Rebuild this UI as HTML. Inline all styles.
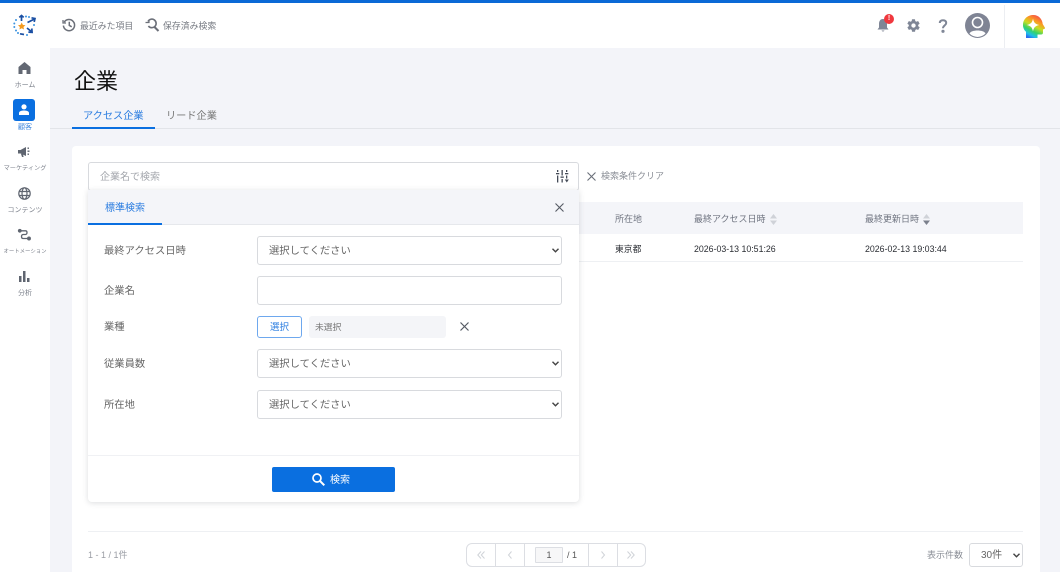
<!DOCTYPE html>
<html lang="ja"><head><meta charset="utf-8"><title>企業</title>
<style>
*{box-sizing:border-box}
html,body{margin:0;padding:0;width:1060px;height:572px;overflow:hidden;background:#f3f4f9}
body{font-family:"Liberation Sans","Noto Sans CJK JP",sans-serif;color:#333;position:relative}
.a{position:absolute;white-space:nowrap}
.t{position:absolute;white-space:nowrap;line-height:14px}
svg{position:absolute;overflow:visible}
.nav{position:absolute;left:0;width:50px;text-align:center;font-size:7px;line-height:10px;color:#7d828c;white-space:nowrap}
.sel{position:absolute;left:257px;width:305px;height:29px;background:#fff;border:1px solid #d8dade;border-radius:3px;font-size:10.3px;line-height:29px;padding-left:11px;color:#666}
.lab{position:absolute;left:104px;font-size:10.3px;line-height:14px;color:#666;white-space:nowrap}
.th{position:absolute;top:212px;font-size:9px;line-height:14px;color:#6f7480;white-space:nowrap}
.td{position:absolute;top:242px;font-size:8.8px;line-height:14px;color:#2a2d33;white-space:nowrap}
</style></head><body>
<div class="a" style="left:0;top:0;width:1060px;height:48px;background:#fff"></div>
<div class="a" style="left:0;top:0;width:1060px;height:3px;background:#0a69d6"></div>
<div class="a" style="left:0;top:48px;width:50px;height:524px;background:#fff"></div>

<!-- logo -->
<svg style="left:13px;top:15px" width="23" height="22" viewBox="0 0 23 22">
<polygon points="8.700,7.500 9.900,9.900 12.400,10.200 10.500,12 11,14.500 8.700,13.300 6.400,14.500 6.900,12 5,10.200 7.500,9.900" fill="#f39a1e"/>
<g fill="none" stroke="#1a4fa3" stroke-width="1.700">
<path d="M8.500 6V1.500"/><path d="M6.300 2.400L8.500.5l2.200 1.900"/>
<path d="M14.500 7.500L21.500 4"/><path d="M18.500 2.800L22 3.500l-.8 3.400"/>
<path d="M14 13l4.500 3.700"/><path d="M18.800 13.500l.3 3.800-3.700-.2"/>
<path d="M11 19.500L7 18.800"/>
</g>
<g fill="#3b93e0"><circle cx="3" cy="5" r="1"/><circle cx="1.300" cy="8.500" r="1"/><circle cx="1.300" cy="12" r="1"/><circle cx="3" cy="15.500" r="1"/><circle cx="5" cy="18" r="1"/><circle cx="13" cy="1.500" r="1"/><circle cx="16" cy="2" r="1"/><circle cx="21" cy="10" r="1"/><circle cx="14" cy="20" r="1"/></g>
</svg>

<!-- top links -->
<svg style="left:62px;top:18px" width="14" height="14" viewBox="0 0 14 14" fill="none" stroke="#6c7079" stroke-width="1.500"><path d="M2.200 4.200A5.600 5.600 0 1 1 1.400 7.600"/><path d="M1 2v3h3" stroke-width="1.300"/><path d="M7.300 3.800v3.600l2.400 1.400"/></svg>
<div class="t" style="left:80px;top:19px;font-size:8.900px;color:#777b83">最近みた項目</div>
<svg style="left:145px;top:18px" width="15" height="14" viewBox="0 0 15 14" fill="none" stroke="#6c7079" stroke-width="1.600"><path d="M3 3.500A4.300 4.300 0 1 1 3.400 8"/><path d="M9 8.500l4.500 4.500" stroke-width="2"/><path d="M0.500 4.500h3.500v-3" stroke-width="1.200"/></svg>
<div class="t" style="left:163px;top:19px;font-size:8.900px;color:#777b83">保存済み検索</div>

<!-- header right -->
<svg style="left:876px;top:18px" width="14" height="15" viewBox="0 0 14 15"><path d="M7 1C4 1 3 3.500 3 6v3.500L1.500 11.500h11L11 9.500V6C11 3.500 10 1 7 1z" fill="#7f8696"/><path d="M5.500 12.500a1.600 1.600 0 0 0 3 0z" fill="#7f8696"/></svg>
<div class="a" style="left:884px;top:14px;width:10px;height:10px;border-radius:50%;background:#f0383e;color:#fff;font-size:7px;line-height:10px;text-align:center;font-weight:bold">!</div>
<svg style="left:906px;top:18px" width="15" height="15" viewBox="0 0 24 24"><path fill="#7f8696" d="M19.400 13c.04-.3.100-.65.100-1s-.06-.7-.1-1l2.100-1.650c.2-.15.250-.4.120-.63l-2-3.460c-.12-.22-.38-.3-.6-.22l-2.500 1c-.52-.4-1.080-.73-1.700-.98l-.37-2.650A.5.500 0 0 0 14 2h-4c-.25 0-.46.180-.5.420l-.37 2.650c-.62.250-1.180.580-1.700.980l-2.500-1c-.22-.08-.48 0-.6.220l-2 3.460c-.13.220-.07.480.12.630L4.600 11c-.04.300-.1.660-.1 1s.06.700.1 1l-2.100 1.650c-.2.150-.250.400-.12.630l2 3.460c.12.220.38.300.6.220l2.500-1c.52.400 1.080.730 1.700.980l.37 2.650c.04.240.25.420.5.420h4c.25 0 .46-.18.500-.42l.37-2.650c.62-.25 1.180-.58 1.700-.98l2.500 1c.22.080.48 0 .6-.22l2-3.460c.13-.22.07-.48-.12-.63zM12 15.500a3.500 3.500 0 1 1 0-7 3.500 3.500 0 0 1 0 7z"/></svg>
<svg style="left:938px;top:19px" width="10" height="14" viewBox="0 0 10 14" fill="none" stroke="#7f8696" stroke-width="2"><path d="M1.800 4C1.800 2 3 1.200 5 1.200S8.200 2.200 8.200 4C8.200 6.300 5 6.500 5 9.300"/><circle cx="5" cy="12.300" r=".6" fill="#7f8696"/></svg>
<svg style="left:965px;top:13px" width="25" height="25" viewBox="0 0 25 25"><circle cx="12.500" cy="12.500" r="12.500" fill="#7f8494"/><circle cx="12.500" cy="9.500" r="5" fill="none" stroke="#fff" stroke-width="1.600"/><path d="M4.500 20.500C6 16.500 19 16.500 20.500 20.500A11 11 0 0 1 4.500 20.500z" fill="#fff"/></svg>
<div class="a" style="left:1004px;top:5px;width:1px;height:43px;background:#eceef2"></div>
<svg style="left:1023px;top:15px" width="22" height="23" viewBox="0 0 22 23">
<defs><linearGradient id="g" x1=".8" y1="0" x2=".3" y2="1"><stop offset="0" stop-color="#f43a5a"/><stop offset=".3" stop-color="#fb9a22"/><stop offset=".5" stop-color="#c8dd22"/><stop offset=".7" stop-color="#35d268"/><stop offset=".87" stop-color="#1ec0e8"/><stop offset="1" stop-color="#2a6cf0"/></linearGradient></defs>
<path d="M10.500 0C4.500 0 0 4 0 10c0 3 1.200 5.200 3 6.800V23h11.500v-3.500h3.500c1.500 0 2-.8 2-2v-3l1.600-.7c.5-.3.500-.8.200-1.300L19.700 9C19.300 4 15.500 0 10.500 0z" fill="url(#g)"/>
<path d="M10 3.500c.7 4 2 5.400 6.200 6.500-4.200 1.100-5.500 2.500-6.200 6.500-.7-4-2-5.400-6.200-6.500 4.200-1.100 5.500-2.500 6.200-6.500z" fill="#fff"/></svg>

<!-- sidebar -->
<svg style="left:18px;top:62px" width="13" height="12" viewBox="0 0 13 12"><path d="M6.500 0L12.500 5V12H8.500V8H4.500V12H.5V5z" fill="#636873"/></svg>
<div class="nav" style="top:80px;line-height:12px">ホーム</div>
<div class="a" style="left:13px;top:99px;width:22px;height:22px;border-radius:3px;background:#0a6fe0"></div>
<svg style="left:18px;top:104px" width="12" height="11" viewBox="0 0 12 11" fill="#fff"><circle cx="6" cy="2.800" r="2.600"/><path d="M1 11V9C1 7 4 6.500 6 6.500S11 7 11 9v2z"/></svg>
<div class="nav" style="top:122px;line-height:12px;color:#3b85dd">顧客</div>
<svg style="left:18px;top:146px" width="13" height="12" viewBox="0 0 13 12" fill="#5f6570"><path d="M0 4h2.500L8 1v9L2.500 7.500H0z"/><path d="M3 8h2l.6 3H4z"/><rect x="9.500" y="4.500" width="2" height="1.400"/><rect x="9.500" y="1.500" width="1.500" height="1.400"/><rect x="9.500" y="7.500" width="1.500" height="1.400"/></svg>
<div class="nav" style="top:163px;line-height:12px;font-size:6.2px">マーケティング</div>
<svg style="left:18px;top:187px" width="13" height="13" viewBox="0 0 13 13" fill="none" stroke="#5f6570" stroke-width="1.200"><circle cx="6.500" cy="6.500" r="5.700"/><ellipse cx="6.500" cy="6.500" rx="2.500" ry="5.700"/><path d="M1 4.500h11M1 8.500h11"/></svg>
<div class="nav" style="top:205px;line-height:12px">コンテンツ</div>
<svg style="left:18px;top:229px" width="13" height="12" viewBox="0 0 13 12" fill="none" stroke="#5f6570" stroke-width="1.300"><circle cx="1.800" cy="1.800" r="1.300" fill="#5f6570"/><circle cx="11" cy="9.500" r="1.300" fill="#5f6570"/><path d="M3 1.800H7.500C9.500 1.800 9.500 5.500 7.500 5.500H5C3 5.500 3 9.500 5 9.500H10"/></svg>
<div class="nav" style="top:246px;line-height:12px;font-size:5.400px">オートメーション</div>
<svg style="left:19px;top:271px" width="11" height="11" viewBox="0 0 11 11" fill="#5f6570"><rect x="0" y="5" width="2.500" height="6"/><rect x="4" y="0" width="2.500" height="11"/><rect x="8" y="7" width="2.500" height="4"/></svg>
<div class="nav" style="top:288px;line-height:12px">分析</div>

<!-- page heading -->
<div class="t" style="left:74px;top:69px;font-size:22px;line-height:26px;color:#111">企業</div>
<div class="t" style="left:83px;top:109px;font-size:10.2px;line-height:16px;color:#2b7de0">アクセス企業</div>
<div class="t" style="left:166px;top:109px;font-size:10.2px;line-height:16px;color:#777">リード企業</div>
<div class="a" style="left:50px;top:128px;width:1010px;height:1px;background:#e2e4e9"></div>
<div class="a" style="left:72px;top:127px;width:83px;height:2px;background:#0a6fe0"></div>

<!-- card -->
<div class="a" style="left:72px;top:146px;width:968px;height:426px;background:#fff;border-radius:4px 4px 0 0"></div>

<!-- search box -->
<div class="a" style="left:88px;top:162px;width:491px;height:29px;border:1px solid #d8dade;border-radius:3px;background:#fff"></div>
<div class="t" style="left:100px;top:171px;font-size:10px;color:#a4a7ad">企業名で検索</div>
<svg style="left:556px;top:170px" width="13" height="13" viewBox="0 0 13 13" fill="#444b57"><rect x="1" y="0" width="1.300" height="2"/><rect x="0" y="3" width="3.300" height="1.300"/><rect x="1" y="5.500" width="1.300" height="7"/><rect x="5.500" y="0" width="1.300" height="5.500"/><rect x="4.500" y="6.500" width="3.300" height="1.300"/><rect x="5.500" y="9" width="1.300" height="3.500"/><rect x="10" y="0" width="1.300" height="2"/><rect x="9" y="3" width="3.300" height="1.300"/><rect x="10" y="5.500" width="1.300" height="3"/><path d="M8.800 9.500h4l-2 3z"/></svg>
<svg style="left:587px;top:172px" width="9" height="9" viewBox="0 0 9 9" stroke="#6a6f79" stroke-width="1.100"><path d="M.5.500l8 8M8.500.5l-8 8"/></svg>
<div class="t" style="left:601px;top:169px;font-size:9px;color:#8a8e96">検索条件クリア</div>

<!-- table -->
<div class="a" style="left:579px;top:202px;width:444px;height:32px;background:#f4f5f9"></div>
<div class="th" style="left:615px">所在地</div>
<div class="th" style="left:694px">最終アクセス日時</div>
<svg style="left:770px;top:214px" width="7" height="11" viewBox="0 0 7 11" fill="#cfd2d8"><path d="M3.500 0L7 4.500H0zM0 6.500h7L3.500 11z"/></svg>
<div class="th" style="left:865px">最終更新日時</div>
<svg style="left:923px;top:214px" width="7" height="11" viewBox="0 0 7 11"><path d="M3.500 0L7 4.500H0z" fill="#cfd2d8"/><path d="M0 6.500h7L3.500 11z" fill="#7b808c"/></svg>
<div class="td" style="left:615px">東京都</div>
<div class="td" style="left:694px">2026-03-13 10:51:26</div>
<div class="td" style="left:865px">2026-02-13 19:03:44</div>
<div class="a" style="left:579px;top:261px;width:444px;height:1px;background:#eef0f3"></div>

<!-- panel -->
<div class="a" style="left:88px;top:190px;width:491px;height:312px;background:#fff;border-radius:0 0 4px 4px;box-shadow:0 1px 6px rgba(60,65,80,.18)"></div>
<div class="a" style="left:88px;top:190px;width:491px;height:35px;background:#f4f5f9;border-bottom:1px solid #e6e8ec"></div>
<div class="a" style="left:88px;top:223px;width:74px;height:2px;background:#0a6fe0"></div>
<div class="t" style="left:105px;top:202px;font-size:10px;color:#2b7de0">標準検索</div>
<svg style="left:555px;top:203px" width="9" height="9" viewBox="0 0 9 9" stroke="#555a64" stroke-width="1.100"><path d="M.5.500l8 8M8.500.5l-8 8"/></svg>

<div class="lab" style="top:245px">最終アクセス日時</div>
<div class="sel" style="top:236px">選択してください</div>
<svg style="left:552px;top:248px" width="7" height="5" viewBox="0 0 7 5" fill="none" stroke="#444" stroke-width="1.400"><path d="M.5.700L3.500 3.700 6.500.7"/></svg>

<div class="lab" style="top:285px">企業名</div>
<div class="sel" style="top:276px"></div>

<div class="lab" style="top:321px">業種</div>
<div class="a" style="left:257px;top:316px;width:45px;height:22px;border:1px solid #6ea8ee;border-radius:3px;background:#fff;font-size:9.500px;line-height:22px;text-align:center;color:#2b7de0">選択</div>
<div class="a" style="left:309px;top:316px;width:137px;height:22px;border-radius:3px;background:#f4f5f8;font-size:8.800px;line-height:22px;padding-left:6px;color:#777">未選択</div>
<svg style="left:460px;top:322px" width="9" height="9" viewBox="0 0 9 9" stroke="#555a64" stroke-width="1.200"><path d="M.5.500l8 8M8.500.5l-8 8"/></svg>

<div class="lab" style="top:358px">従業員数</div>
<div class="sel" style="top:349px">選択してください</div>
<svg style="left:552px;top:361px" width="7" height="5" viewBox="0 0 7 5" fill="none" stroke="#444" stroke-width="1.400"><path d="M.5.700L3.500 3.700 6.500.7"/></svg>

<div class="lab" style="top:399px">所在地</div>
<div class="sel" style="top:390px">選択してください</div>
<svg style="left:552px;top:402px" width="7" height="5" viewBox="0 0 7 5" fill="none" stroke="#444" stroke-width="1.400"><path d="M.5.700L3.500 3.700 6.500.7"/></svg>

<div class="a" style="left:88px;top:455px;width:491px;height:1px;background:#f0f1f4"></div>
<div class="a" style="left:272px;top:467px;width:123px;height:25px;border-radius:2px;background:#0a6fe0"></div>
<svg style="left:312px;top:473px" width="13" height="13" viewBox="0 0 13 13" fill="none" stroke="#fff" stroke-width="1.700"><circle cx="5" cy="5" r="4"/><path d="M8 8l4.300 4.300" stroke-width="2"/></svg>
<div class="t" style="left:330px;top:474px;font-size:10px;color:#fff">検索</div>

<!-- footer -->
<div class="a" style="left:88px;top:531px;width:935px;height:1px;background:#eef0f3"></div>
<div class="t" style="left:88px;top:548px;font-size:9px;color:#9a9da4">1 - 1 / 1件</div>

<div class="a" style="left:466px;top:543px;width:180px;height:24px;border:1px solid #dcdee3;border-radius:6px;background:#fff"></div>
<div class="a" style="left:495px;top:544px;width:1px;height:22px;background:#dcdee3"></div>
<div class="a" style="left:524px;top:544px;width:1px;height:22px;background:#dcdee3"></div>
<div class="a" style="left:588px;top:544px;width:1px;height:22px;background:#dcdee3"></div>
<div class="a" style="left:617px;top:544px;width:1px;height:22px;background:#dcdee3"></div>
<svg style="left:477px;top:551px" width="8" height="8" viewBox="0 0 8 8" fill="none" stroke="#d0d3d8" stroke-width="1"><path d="M4 .5L.8 4 4 7.500M7.500.5L4.300 4l3.200 3.500"/></svg>
<svg style="left:508px;top:551px" width="4" height="8" viewBox="0 0 4 8" fill="none" stroke="#d0d3d8" stroke-width="1"><path d="M3.500.5L.5 4l3 3.500"/></svg>
<div class="a" style="left:535px;top:547px;width:28px;height:16px;border:1px solid #dcdee3;border-radius:1px;background:#f7f7f8;font-size:9px;line-height:14px;text-align:center;color:#555">1</div>
<div class="t" style="left:567px;top:548px;font-size:9px;color:#555">/ 1</div>
<svg style="left:601px;top:551px" width="4" height="8" viewBox="0 0 4 8" fill="none" stroke="#d0d3d8" stroke-width="1"><path d="M.5.500L3.500 4l-3 3.500"/></svg>
<svg style="left:627px;top:551px" width="8" height="8" viewBox="0 0 8 8" fill="none" stroke="#d0d3d8" stroke-width="1"><path d="M.5.500L3.700 4 .5 7.500M4 .500L7.200 4 4 7.500"/></svg>

<div class="t" style="left:927px;top:548px;font-size:9px;color:#8a8e96">表示件数</div>
<div class="a" style="left:969px;top:543px;width:54px;height:24px;border:1px solid #d8dade;border-radius:3px;background:#fff;font-size:10px;line-height:24px;padding-left:11px;color:#666">30件</div>
<svg style="left:1013px;top:553px" width="7" height="5" viewBox="0 0 7 5" fill="none" stroke="#444" stroke-width="1.400"><path d="M.5.700L3.500 3.700 6.500.7"/></svg>
</body></html>
